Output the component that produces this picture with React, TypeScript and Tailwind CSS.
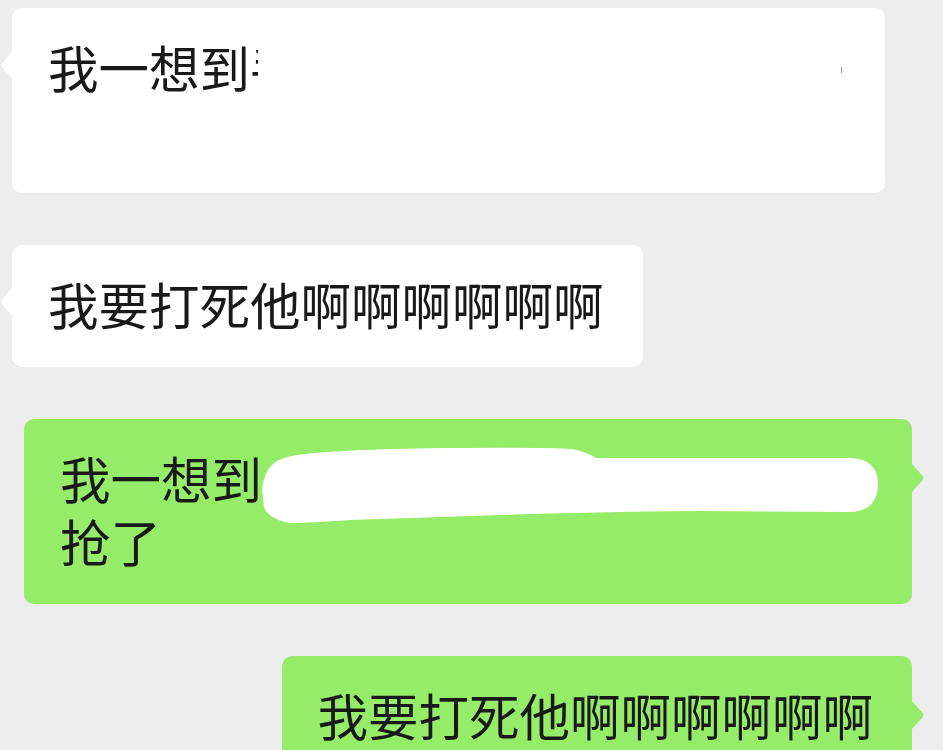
type Side = "left" | "right";

const font = { fontFamily: "'Noto Sans CJK SC', 'Noto Sans', sans-serif" };

// little pointer on the side of each bubble
function Tail({ side, color }: { side: Side; color: string }) {
  if (side === "left") {
    return (
      <svg
        className="absolute top-[41px] -left-[12px]"
        width="14"
        height="32"
        viewBox="0 0 14 32"
      >
        <path d="M14 0 L2.6 13.6 Q0.6 16 2.6 18.4 L14 32 Z" fill={color} />
      </svg>
    );
  }
  return (
    <svg
      className="absolute top-[43px] -right-[13px]"
      width="15"
      height="32"
      viewBox="0 0 15 32"
    >
      <path d="M0 0 L12.4 13.6 Q14.4 16 12.4 18.4 L0 32 Z" fill={color} />
    </svg>
  );
}

function Bubble({
  side,
  className = "",
  children,
}: {
  side: Side;
  className?: string;
  children: React.ReactNode;
}) {
  const color = side === "left" ? "#ffffff" : "#95ec69";
  return (
    <div
      className={`relative shrink-0 rounded-[10px] pl-[36px] pr-[39px] pt-[27px] pb-[32px] text-[50.5px] leading-[63px] text-[#191919] ${
        side === "left" ? "self-start ml-[12px] bg-white" : "self-end mr-[31px] bg-[#95ec69]"
      } ${className}`}
      style={font}
    >
      <Tail side={side} color={color} />
      {children}
    </div>
  );
}

// white marker stroke scribbled over part of a message
function Scribble() {
  return (
    <svg
      className="absolute left-0 top-0"
      width="888"
      height="185"
      viewBox="0 0 888 185"
    >
      <path
        d="M238 71 Q240 50 253 42 Q262 37 280 35 Q330 30 426 29 Q520 28 548 30 Q560 32 572 39 L827 39 Q854 40 854 66 Q853 92 827 93 L676 92 Q560 93 476 96 L326 101 Q285 104 266 104 Q244 100 240 88 Z"
        fill="#ffffff"
      />
    </svg>
  );
}

export default function App() {
  return (
    <div className="w-[943px] h-[750px] overflow-hidden bg-[#ededed] flex flex-col gap-[52px] pt-[8px]">
      <Bubble side="left" className="w-[873px]">
        <div className="whitespace-nowrap">
          我一想到
          <span className="inline-block w-[8px] overflow-hidden align-top">手</span>
        </div>
        <div>&nbsp;</div>
        <span className="absolute left-[829px] top-[59px] w-px h-[6px] bg-[#9a9a9a]" />
      </Bubble>

      <Bubble side="left">我要打死他啊啊啊啊啊啊</Bubble>

      <Bubble side="right" className="w-[888px]">
        <div>我一想到</div>
        <div>抢了</div>
        <Scribble />
      </Bubble>

      <Bubble side="right">我要打死他啊啊啊啊啊啊</Bubble>
    </div>
  );
}
